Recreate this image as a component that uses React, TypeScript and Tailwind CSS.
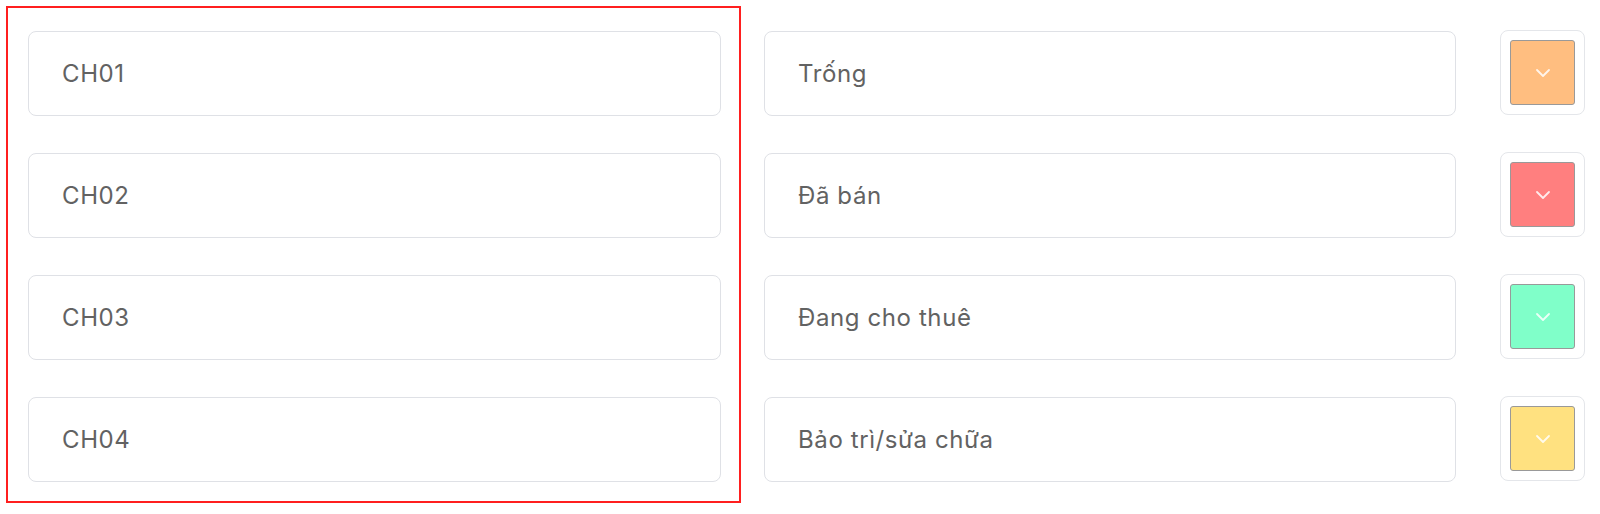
const CAN_HO = ["CH01", "CH02", "CH03", "CH04"];

const TRANG_THAI: { ten: string; mau: string }[] = [
  { ten: "Trống", mau: "bg-[#ffbe80]" },
  { ten: "Đã bán", mau: "bg-[#ff7f7f]" },
  { ten: "Đang cho thuê", mau: "bg-[#80ffc9]" },
  { ten: "Bảo trì/sửa chữa", mau: "bg-[#ffe180]" },
];

function ChevronDown() {
  return (
    <svg width="16" height="10" viewBox="0 0 16 10" fill="none">
      <path
        d="M2 2l6 6 6-6"
        stroke="white"
        strokeOpacity="0.85"
        strokeWidth="1.8"
        strokeLinecap="round"
        strokeLinejoin="round"
      />
    </svg>
  );
}

function O({ text }: { text: string }) {
  return (
    <div className="flex h-[85px] items-center rounded-[8px] border border-[#dfe1e6] bg-white pl-[33px] text-[24px] tracking-[0.6px] text-[#626262]">
      {text}
    </div>
  );
}

export default function App() {
  return (
    <div
      className="flex h-[514px] w-[1600px] items-start bg-white pl-[6px] pt-[6px]"
      style={{ fontFamily: "Inter, 'Noto Sans', sans-serif" }}
    >
      {/* cột mã căn hộ */}
      <div className="flex w-[735px] flex-col gap-[37px] border-[2.5px] border-[#ff1f1f] pb-[19px] pl-[20px] pr-[18px] pt-[23px]">
        {CAN_HO.map((ma) => (
          <O key={ma} text={ma} />
        ))}
      </div>

      {/* cột trạng thái */}
      <div className="ml-[23px] flex flex-col gap-[37px] pt-[25px]">
        {TRANG_THAI.map((tt) => (
          <div key={tt.ten} className="flex items-start gap-[44px]">
            <div className="w-[692px]">
              <O text={tt.ten} />
            </div>
            <div className="-mt-[1px] flex h-[85px] w-[85px] items-center justify-center rounded-[8px] border border-[#e4e6ea] bg-white">
              <div
                className={`flex h-[65px] w-[65px] items-center justify-center rounded-[3px] border-[1.5px] border-[#999999] ${tt.mau}`}
              >
                <ChevronDown />
              </div>
            </div>
          </div>
        ))}
      </div>
    </div>
  );
}
